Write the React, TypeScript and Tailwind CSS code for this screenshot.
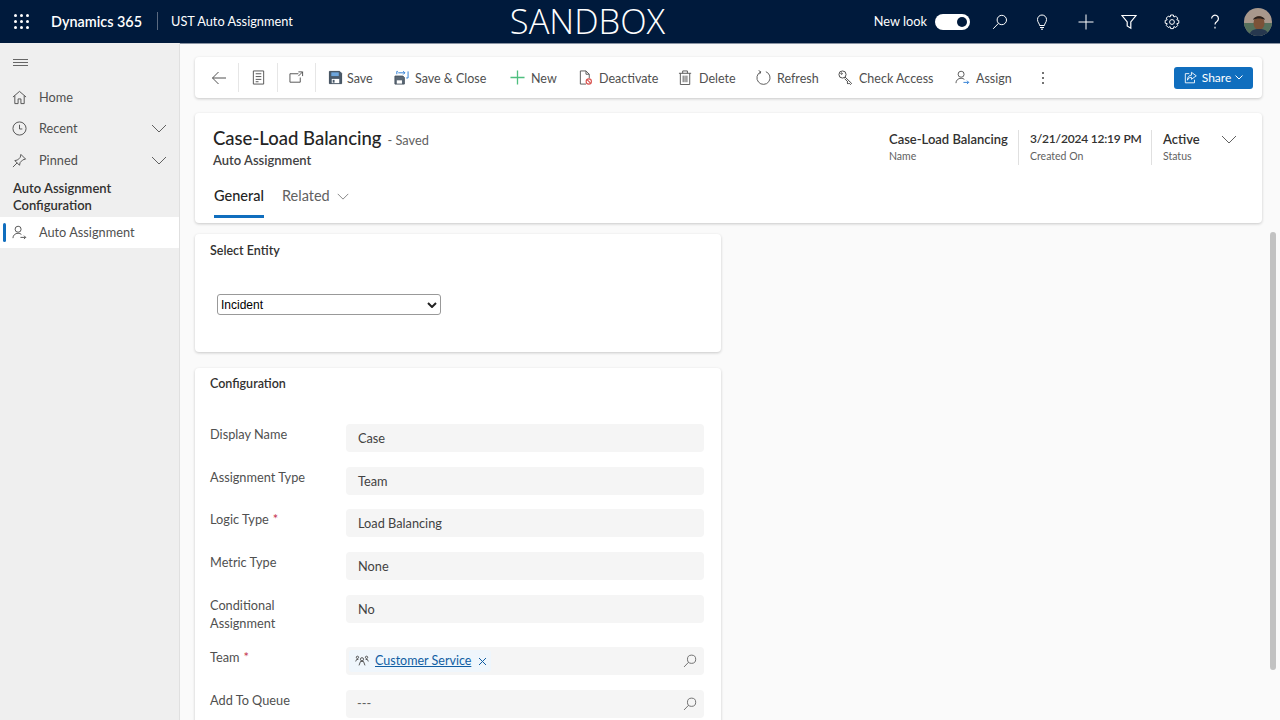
import type { ReactNode } from 'react';

const Ic = ({ children, size = 15, className = '' }: { children: ReactNode; size?: number; className?: string }) => (
  <svg width={size} height={size} viewBox="0 0 16 16" fill="none" stroke="currentColor" strokeWidth="1" className={`shrink-0 ${className}`}>
    {children}
  </svg>
);

const Chevron = ({ className = '' }: { className?: string }) => (
  <svg width="16" height="9" viewBox="0 0 16 9" fill="none" stroke="currentColor" strokeWidth="1" className={className}>
    <path d="M1 1l7 7 7-7" />
  </svg>
);

const SearchIcon = ({ size = 16 }: { size?: number }) => (
  <Ic size={size}>
    <circle cx="9.800" cy="6" r="4.700" />
    <path d="M6.400 9.400L1.200 14.800" />
  </Ic>
);

const Floppy = () => (
  <Ic size={15} className="mr-[-2px]">
    <path d="M1.500 1.500h11l2 2v11h-13z" fill="#4a5a6a" stroke="#3c4a58" />
    <rect x="3.500" y="2.500" width="8" height="4" fill="#6ea6dc" stroke="none" />
    <rect x="4" y="9.500" width="8" height="4.500" fill="#fff" stroke="none" />
    <rect x="5" y="10.500" width="2" height="3" fill="#4a5a6a" stroke="none" />
  </Ic>
);

const commands: { label: string; width: string; icon: ReactNode }[] = [
  { label: 'Save', width: 'w-[66px]', icon: <Floppy /> },
  {
    label: 'Save & Close',
    width: 'w-[116px]',
    icon: (
      <Ic>
        <path d="M1 6.500h8.500l1.500 1.500v7H1z" fill="#5b6875" stroke="#46525e" />
        <rect x="3" y="11" width="5.500" height="3.500" fill="#fff" stroke="none" />
        <path d="M3 4.500V1.500h1M15 1.500v7h-2M4.500 3h7M9.800 1.200L11.600 3 9.800 4.800" stroke="#2b7cd3" />
      </Ic>
    ),
  },
  {
    label: 'New',
    width: 'w-[68px]',
    icon: (
      <Ic>
        <path d="M8 .5v15M.5 8h15" stroke="#4fbf7f" strokeWidth="1.400" />
      </Ic>
    ),
  },
  {
    label: 'Deactivate',
    width: 'w-[100px]',
    icon: (
      <Ic>
        <path d="M8.500 15H2.500V1h6l3.500 3.500V9M8.500 1v3.500H12" stroke="#555" />
        <circle cx="11.500" cy="12.200" r="2.800" stroke="#d9534f" strokeWidth="1.200" />
        <path d="M9.600 10.300l3.800 3.800" stroke="#d9534f" strokeWidth="1.200" />
      </Ic>
    ),
  },
  {
    label: 'Delete',
    width: 'w-[78px]',
    icon: (
      <Ic>
        <path d="M2.500 3.500V15.500h10V3.500M1 3.500h13M5 3.500V1h5v2.500M5.500 6v7M7.500 6v7M9.500 6v7" stroke="#555" />
      </Ic>
    ),
  },
  {
    label: 'Refresh',
    width: 'w-[82px]',
    icon: (
      <Ic>
        <path d="M5 2A7 7 0 1 0 10.500 1.800M2.800 .6L5.200 2 3.800 4.400" stroke="#555" />
      </Ic>
    ),
  },
  {
    label: 'Check Access',
    width: 'w-[117px]',
    icon: (
      <Ic>
        <circle cx="4.800" cy="4.800" r="3.800" stroke="#444" />
        <circle cx="3.800" cy="3.800" r="0.800" stroke="#444" />
        <path d="M7.500 7.500l7 6.800-1.200 1.200-1.500-1.500-1 1-1.200-1.200 1-1L7 9.200" stroke="#444" />
      </Ic>
    ),
  },
  {
    label: 'Assign',
    width: 'w-[87px]',
    icon: (
      <Ic>
        <circle cx="6.500" cy="4.500" r="3.200" stroke="#555" />
        <path d="M1 14c0-3 2.400-5.200 5.500-5.200 1.400 0 2.600.4 3.500 1.200" stroke="#555" />
        <path d="M9 13.200h5.500M12.800 11.400l1.800 1.800-1.800 1.800" stroke="#2b7cd3" />
      </Ic>
    ),
  },
];

const TeamIcon = () => (
  <Ic size={14} className="text-[#444]">
    <circle cx="8" cy="6" r="1.800" />
    <path d="M4.600 13l1.700-4.500h3.400l1.700 4.500" />
    <circle cx="2.800" cy="3.800" r="1.300" />
    <circle cx="13.200" cy="3.800" r="1.300" />
    <path d="M.8 8.500l1-2.200h2M15.200 8.500l-1-2.200h-2" />
  </Ic>
);

const Field = ({ label, required, tall, children }: { label: ReactNode; required?: boolean; tall?: boolean; children: ReactNode }) => (
  <div className={`flex ${tall ? 'h-[52.500px]' : 'h-[42.7px]'}`}>
    <div className="w-[136px] shrink-0 pt-px text-[12.750px] leading-[18px] text-[#505050]">
      {label}
      {required && <span className="ml-[4px] text-[#c4314b]">*</span>}
    </div>
    {children}
  </div>
);

const Value = ({ children }: { children: ReactNode }) => (
  <div className="flex h-[28px] w-[358px] items-center rounded-[4px] bg-[#f5f5f5] px-[12px] pt-px text-[12.750px] text-[#424242]">{children}</div>
);

const NavItem = ({ icon, label, chevron }: { icon: ReactNode; label: string; chevron?: boolean }) => (
  <div className="flex h-[31.500px] items-center px-[12px] text-[12.750px] text-[#505050]">
    <span className="mr-[12px] flex w-[15px] justify-center">{icon}</span>
    <span className="flex-1">{label}</span>
    {chevron && <Chevron className="text-[#616161]" />}
  </div>
);

const Card = ({ className = '', children }: { className?: string; children: ReactNode }) => (
  <div className={`rounded-[4px] bg-white shadow-[0_1px_3px_rgba(0,0,0,0.2)] ${className}`}>{children}</div>
);

export default function App() {
  return (
    <div className="flex h-[720px] w-[1280px] flex-col overflow-hidden bg-[#fafafa] font-['Lato','Noto_Sans',sans-serif]">
      {/* top bar */}
      <header className="flex h-[43px] shrink-0 items-center bg-[#001a3c] text-white shadow-[0_1px_0_#8a94a3]">
        <div className="flex w-[507px] shrink-0 items-center">
          <div className="ml-[14px] grid w-[15px] grid-cols-3 gap-[3px]">
            {Array.from({ length: 9 }).map((_, i) => (
              <span key={i} className="h-[3px] w-[3px] rounded-full bg-white" />
            ))}
          </div>
          <span className="ml-[22px] w-[91px] text-[14.400px] font-semibold whitespace-nowrap">Dynamics 365</span>
          <span className="ml-[15px] h-[18px] w-px bg-[#5b6a80]" />
          <span className="ml-[13px] text-[12.750px]">UST Auto Assignment</span>
        </div>
        <span className="w-[161px] pb-[2px] text-center font-['Open_Sans',sans-serif] text-[34.500px] leading-[41px] font-light whitespace-nowrap">SANDBOX</span>
        <span className="ml-auto text-[12.750px]">New look</span>
        <span className="ml-[8px] flex h-[16px] w-[35px] items-center justify-end rounded-full bg-white pr-[3px]">
          <span className="h-[10px] w-[10px] rounded-full bg-[#001a3c]" />
        </span>
        <span className="ml-[22px] flex w-[16px]">
          <SearchIcon />
        </span>
        <span className="ml-[26px]">
          <Ic size={16}>
            <path d="M5.600 11.500c0-2-2.100-3-2.100-6a4.500 4.500 0 0 1 9 0c0 3-2.100 4-2.100 6zM6 13.500h4M7 15.200h2" />
          </Ic>
        </span>
        <span className="ml-[28px]">
          <Ic size={16}>
            <path d="M8 .5v15M.5 8h15" />
          </Ic>
        </span>
        <span className="ml-[27px]">
          <Ic size={16}>
            <path d="M1 1.500h14L9.800 8v6.200L6.200 12V8z" strokeWidth="1.200" />
          </Ic>
        </span>
        <span className="ml-[27px]">
          <Ic size={16}>
            <circle cx="8" cy="8" r="2.400" />
            <path d="M6.600 1h2.800l.5 2 1.800-.9 2 2-.9 1.800 2 .5v2.800l-2 .5.9 1.800-2 2-1.800-.9-.5 2H6.600l-.5-2-1.800.9-2-2 .9-1.800-2-.5V6.400l2-.5-.9-1.800 2-2 1.800.9z" />
          </Ic>
        </span>
        <span className="ml-[27px]">
          <Ic size={16}>
            <path d="M4.600 4.600a3.400 3.400 0 1 1 5.300 2.800C8.600 8.200 8 9 8 10.500M8 12.800v1.600" strokeWidth="1.200" />
          </Ic>
        </span>
        <span className="mr-[8px] ml-[21px]">
          <svg width="28" height="28" viewBox="0 0 28 28" className="rounded-full">
            <rect width="28" height="28" fill="#a8988c" />
            <rect y="15" width="28" height="13" fill="#54705c" />
            <ellipse cx="15" cy="15" rx="5.500" ry="7" fill="#7b5238" />
            <path d="M9 12c1-5 11-5 12 0-3-2-9-2-12 0z" fill="#2a211c" />
            <path d="M5 28c1-6 5-7 10-7s9 1 10 7z" fill="#27384f" />
          </svg>
        </span>
      </header>

      <div className="flex min-h-0 flex-1">
        {/* sidebar */}
        <aside className="w-[180px] shrink-0 border-r border-[#e0e0e0] bg-[#efefef]">
          <div className="flex h-[38.500px] items-center pl-[13px]">
            <span className="flex w-[15px] flex-col gap-[2px]">
              <span className="h-px bg-[#666]" />
              <span className="h-px bg-[#666]" />
              <span className="h-px bg-[#666]" />
            </span>
          </div>
          <NavItem
            label="Home"
            icon={
              <Ic>
                <path d="M1 7.500l7-6 7 6M3 6v8.500h3.500V9.500h3v5H13V6" />
              </Ic>
            }
          />
          <NavItem
            label="Recent"
            chevron
            icon={
              <Ic>
                <circle cx="8" cy="8" r="7" />
                <path d="M8 4v4.500h3" />
              </Ic>
            }
          />
          <NavItem
            label="Pinned"
            chevron
            icon={
              <Ic>
                <path d="M9.500 1.500l5 5-3 .8-2.800 2.800-.7 3-5-5 3-.7 2.800-2.800zM5.500 10.500L1 15" />
              </Ic>
            }
          />
          <div className="mt-[4px] px-[13px] text-[13px] leading-[17px] font-semibold text-[#323130]">
            Auto Assignment
            <br />
            Configuration
          </div>
          <div className="relative mt-[3px] flex h-[31px] items-center bg-white pl-[12px] text-[12.750px] text-[#505050]">
            <span className="absolute top-[6px] left-[3px] h-[19px] w-[3px] rounded-full bg-[#106ebe]" />
            <span className="mr-[12px] flex w-[15px] justify-center">
              <Ic>
                <circle cx="6.500" cy="4.500" r="3.200" />
                <path d="M1 14c0-3 2.400-5.200 5.500-5.200 1.400 0 2.600.4 3.500 1.200M9 13.200h5.500M12.800 11.400l1.800 1.800-1.800 1.800" />
              </Ic>
            </span>
            Auto Assignment
          </div>
        </aside>

        {/* main */}
        <main className="relative min-w-0 flex-1 pt-[14px] pl-[15px]">
          <span className="absolute top-[189px] right-[4px] h-[438px] w-[6px] rounded-full bg-[#c2c2c2]" />

          <Card className="flex h-[41px] w-[1067px] items-center text-[12.500px] text-[#505050]">
            <span className="flex w-[43px] justify-center pl-[5px]">
              <Ic size={16}>
                <path d="M15 8H1.500M7.500 2L1.500 8l6 6" />
              </Ic>
            </span>
            <span className="h-[29px] w-px bg-[#e6e6e6]" />
            <span className="flex w-[38px] justify-center">
              <Ic>
                <path d="M2.500 1h11v14h-11zM5 4h6M5 7h6M5 10h6M5 12.500h3" />
              </Ic>
            </span>
            <span className="h-[29px] w-px bg-[#e6e6e6]" />
            <span className="flex w-[37px] justify-center">
              <Ic>
                <path d="M10 4H1v9h11V8M10 2h4.500v4.500M14.500 2L10 6.500" />
              </Ic>
            </span>
            <span className="h-[29px] w-px bg-[#e6e6e6]" />
            <div className="ml-[12px] flex items-center">
              {commands.map((c) => (
                <span key={c.label} className={`flex items-center gap-[6px] whitespace-nowrap ${c.width}`}>
                  {c.icon}
                  <span className="pt-[3px]">{c.label}</span>
                </span>
              ))}
            </div>
            <span className="flex flex-col gap-[3px]">
              <span className="h-[2px] w-[2px] rounded-full bg-[#444]" />
              <span className="h-[2px] w-[2px] rounded-full bg-[#444]" />
              <span className="h-[2px] w-[2px] rounded-full bg-[#444]" />
            </span>
            <button className="mr-[9px] ml-auto flex h-[22px] w-[79px] items-center justify-center gap-[4px] rounded-[3px] bg-[#106ebe] text-[12px] text-white">
              <Ic size={14}>
                <path d="M6 3H1.500v10.500H12V10M8.500 1.500l5.500 4-5.500 4V7.200C6 7.200 4.500 8.500 4 10.500c0-4 2-5.700 4.500-5.700z" />
              </Ic>
              Share
              <svg width="8" height="5" viewBox="0 0 8 5" fill="none" stroke="currentColor">
                <path d="M.5.500L4 4 7.500.5" />
              </svg>
            </button>
          </Card>

          <Card className="mt-[15px] flex h-[110px] w-[1067px] justify-between">
            <div className="pl-[18px]">
              <div className="mt-[13px] flex items-baseline">
                <span className="text-[18.500px] leading-[24px] font-medium text-[#242424]">Case-Load Balancing</span>
                <span className="ml-[6px] text-[12.750px] text-[#616161]">- Saved</span>
              </div>
              <div className="mt-[2px] text-[13px] leading-[16px] font-semibold text-[#424242]">Auto Assignment</div>
              <div className="mt-[18px] ml-px flex text-[14.500px]">
                <span className="w-[50px] border-b-[3px] border-[#106ebe] pb-[9px] leading-[20px] font-medium whitespace-nowrap text-[#242424]">General</span>
                <span className="ml-[18px] leading-[20px] text-[#616161]">Related</span>
                <Chevron className="mt-[7px] ml-[7px] h-[7px] w-[12px] text-[#616161]" />
              </div>
            </div>
            <div className="mt-[17px] flex h-[35px] pr-[25px]">
              <div className="w-[129px]">
                <div className="text-[13px] leading-[18px] font-semibold text-[#323130]">Case-Load Balancing</div>
                <div className="text-[10.500px] leading-[16px] text-[#616161]">Name</div>
              </div>
              <div className="w-[133px] border-l border-[#e0e0e0] pl-[11px]">
                <div className="text-[12px] leading-[18px] font-semibold tracking-[-0.2px] whitespace-nowrap text-[#323130]">3/21/2024 12:19 PM</div>
                <div className="text-[10.500px] leading-[16px] text-[#616161]">Created On</div>
              </div>
              <div className="w-[70px] border-l border-[#e0e0e0] pl-[11px]">
                <div className="text-[13px] leading-[18px] font-semibold text-[#323130]">Active</div>
                <div className="text-[10.500px] leading-[16px] text-[#616161]">Status</div>
              </div>
              <Chevron className="mt-[5px] text-[#616161]" />
            </div>
          </Card>

          <Card className="mt-[11px] h-[118px] w-[526px] px-[15px] pt-[8px]">
            <h2 className="text-[12.500px] leading-[18px] font-semibold text-[#323130]">Select Entity</h2>
            <div className="relative mt-[34px] ml-[7px] w-[224px]">
              <select defaultValue="Incident" className="block h-[21px] w-full appearance-none rounded-[3px] border border-[#999] bg-white pl-[3px] font-['Liberation_Sans',sans-serif] text-[12px] text-black">
                <option>Incident</option>
              </select>
              <svg width="10" height="6" viewBox="0 0 10 6" fill="none" stroke="#222" strokeWidth="2" className="pointer-events-none absolute top-[8px] right-[4px]">
                <path d="M1 1l4 4 4-4" />
              </svg>
            </div>
          </Card>

          <Card className="mt-[16px] h-[400px] w-[526px] px-[15px] pt-[7px]">
            <h2 className="text-[12.500px] leading-[18px] font-semibold text-[#323130]">Configuration</h2>
            <div className="mt-[31px]">
              <Field label="Display Name">
                <Value>Case</Value>
              </Field>
              <Field label="Assignment Type">
                <Value>Team</Value>
              </Field>
              <Field label="Logic Type" required>
                <Value>Load Balancing</Value>
              </Field>
              <Field label="Metric Type">
                <Value>None</Value>
              </Field>
              <Field
                tall
                label={
                  <>
                    Conditional
                    <br />
                    Assignment
                  </>
                }
              >
                <Value>No</Value>
              </Field>
              <Field label="Team" required>
                <div className="flex h-[28px] w-[358px] items-center rounded-[4px] bg-[#f5f5f5] pr-[7px] pl-[3px] text-[12.500px]">
                  <span className="flex h-[22px] w-[142px] items-center rounded-[3px] bg-[#eff6fc] pl-[6px] whitespace-nowrap">
                    <TeamIcon />
                    <a className="ml-[6px] w-[96px] pt-px text-[#115ea3] underline">Customer Service</a>
                    <svg width="9" height="9" viewBox="0 0 9 9" fill="none" stroke="#115ea3" className="ml-[7px]">
                      <path d="M1 1l7 7M8 1L1 8" />
                    </svg>
                  </span>
                  <span className="ml-auto text-[#616161]">
                    <SearchIcon size={14} />
                  </span>
                </div>
              </Field>
              <Field label="Add To Queue">
                <div className="flex h-[28px] w-[358px] items-center rounded-[4px] bg-[#f5f5f5] pr-[7px] pl-[11px] text-[12.750px] text-[#616161]">
                  ---
                  <span className="ml-auto">
                    <SearchIcon size={14} />
                  </span>
                </div>
              </Field>
            </div>
          </Card>
        </main>
      </div>
    </div>
  );
}
